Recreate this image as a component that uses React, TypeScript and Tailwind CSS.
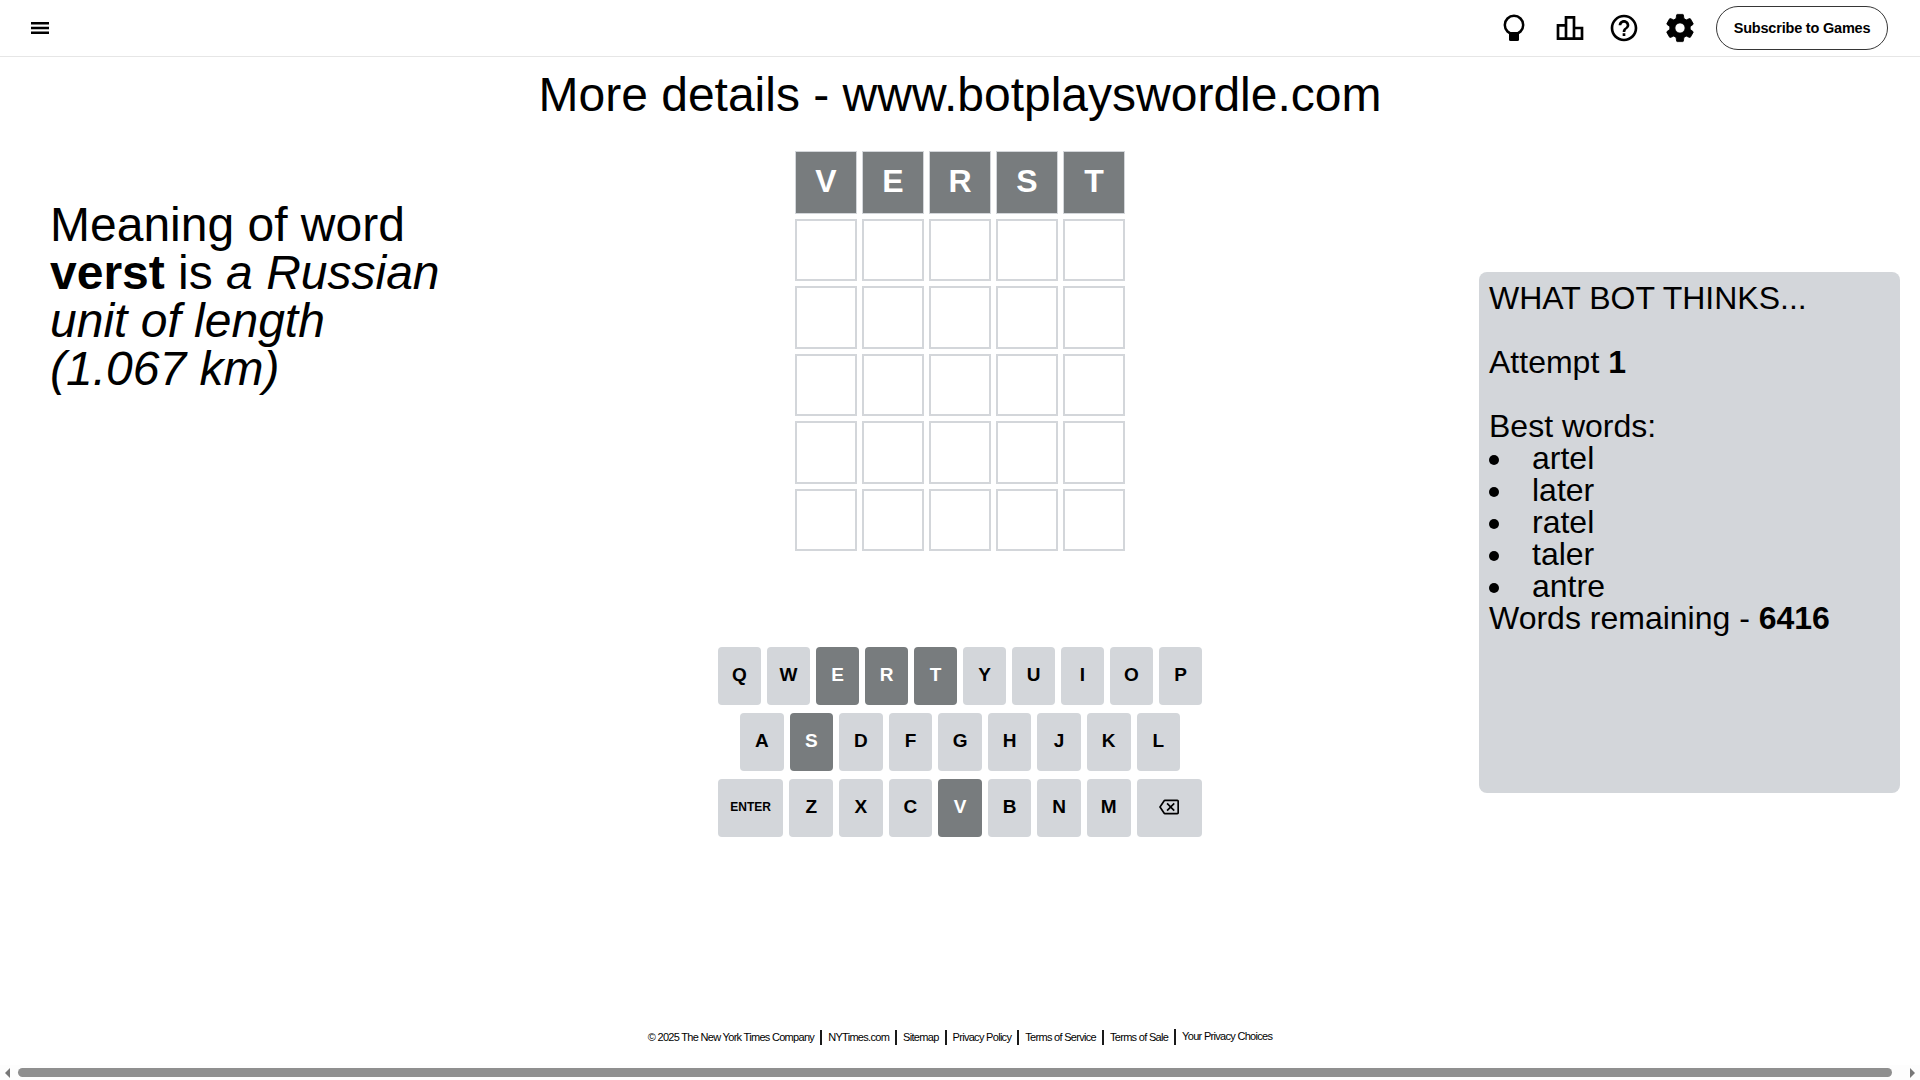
const sans = "font-['Liberation_Sans',Arial,sans-serif]"

const rows = [
  ['Q', 'W', 'E', 'R', 'T', 'Y', 'U', 'I', 'O', 'P'],
  ['A', 'S', 'D', 'F', 'G', 'H', 'J', 'K', 'L'],
  ['ENTER', 'Z', 'X', 'C', 'V', 'B', 'N', 'M', 'BACK'],
]
const used = ['E', 'R', 'T', 'S', 'V']
const footerLinks = ['NYTimes.com', 'Sitemap', 'Privacy Policy', 'Terms of Service', 'Terms of Sale']
const bestWords = ['artel', 'later', 'ratel', 'taler', 'antre']

const Hint = () => (
  <svg width="32" height="32" viewBox="0 0 32 32" fill="none">
    <circle cx="16" cy="13" r="9.200" stroke="black" strokeWidth="2.500" />
    <path d="M11 20h10v7.500a1.500 1.500 0 0 1-1.500 1.500h-7a1.500 1.500 0 0 1-1.500-1.500z" fill="black" />
  </svg>
)

const Stats = () => (
  <svg width="32" height="32" viewBox="0 0 24 24">
    <path d="M16 11V3H8v6H2v12h20V11h-6zm-6-6h4v14h-4V5zm-6 6h4v8H4v-8zm16 8h-4v-6h4v6z" fill="black" />
  </svg>
)

const Help = () => (
  <svg width="32" height="32" viewBox="0 0 24 24">
    <path
      d="M11 18h2v-2h-2v2zm1-16C6.480 2 2 6.480 2 12s4.480 10 10 10 10-4.480 10-10S17.520 2 12 2zm0 18c-4.410 0-8-3.590-8-8s3.590-8 8-8 8 3.590 8 8-3.590 8-8 8zm0-14c-2.210 0-4 1.790-4 4h2c0-1.100.9-2 2-2s2 .9 2 2c0 2-3 1.750-3 5h2c0-2.250 3-2.500 3-5 0-2.210-1.790-4-4-4z"
      fill="black"
    />
  </svg>
)

const Gear = () => (
  <svg width="34" height="34" viewBox="0 0 24 24">
    <path
      d="M19.140 12.940c.04-.3.06-.61.06-.94 0-.32-.02-.64-.07-.94l2.030-1.580a.49.49 0 0 0 .12-.61l-1.920-3.320a.488.488 0 0 0-.59-.22l-2.390.96c-.5-.38-1.030-.7-1.620-.94l-.36-2.540a.484.484 0 0 0-.48-.41h-3.840c-.24 0-.43.17-.47.41l-.36 2.540c-.59.24-1.130.57-1.620.94l-2.390-.96c-.22-.08-.47 0-.59.22L2.740 8.870c-.12.21-.08.47.12.61l2.030 1.580c-.05.3-.09.63-.09.94s.02.64.07.94l-2.030 1.580a.49.49 0 0 0-.12.61l1.920 3.320c.12.22.37.29.59.22l2.390-.96c.5.38 1.030.7 1.620.94l.36 2.540c.05.24.24.41.48.41h3.840c.24 0 .44-.17.47-.41l.36-2.540c.59-.24 1.130-.56 1.620-.94l2.390.96c.22.08.47 0 .59-.22l1.920-3.320c.12-.22.07-.47-.12-.61l-2.010-1.580zM12 15.600c-1.980 0-3.600-1.620-3.600-3.600s1.620-3.600 3.600-3.600 3.600 1.620 3.600 3.600-1.620 3.600-3.600 3.600z"
      fill="black"
      stroke="black"
      strokeWidth="0.6"
    />
  </svg>
)

const Backspace = () => (
  <svg width="20" height="20" viewBox="0 0 24 24">
    <path
      d="M22 3H7c-.69 0-1.230.35-1.590.88L0 12l5.410 8.110c.36.53.9.89 1.590.89h15c1.100 0 2-.9 2-2V5c0-1.100-.9-2-2-2zm0 16H7.070L2.400 12l4.660-7H22v14zm-11.590-2L14 13.410 17.590 17 19 15.590 15.410 12 19 8.410 17.590 7 14 10.590 10.410 7 9 8.410 12.590 12 9 15.590z"
      fill="black"
    />
  </svg>
)

const Key = ({ k }: { k: string }) => {
  const wide = k === 'ENTER' || k === 'BACK'
  const dark = used.includes(k)
  return (
    <div
      className={`h-[58px] rounded flex items-center justify-center font-bold pb-[2px] ${wide ? 'flex-[1.5]' : 'flex-1'} ${
        k === 'ENTER' ? 'text-xs' : 'text-[19px]'
      } ${dark ? 'bg-[#787c7e] text-white' : 'bg-[#d3d6da] text-black'}`}
    >
      {k === 'BACK' ? <Backspace /> : k}
    </div>
  )
}

export default function App() {
  return (
    <div className={`${sans} relative h-screen overflow-hidden bg-white text-black flex flex-col`}>
      <header className="h-[57px] shrink-0 border-b border-[#e6e6e6] flex items-center pl-[28px] pr-[32px]">
        <svg width="24" height="24" viewBox="0 0 24 24" className="shrink-0">
          <path d="M3 6h18v2.500H3zM3 10.800h18v2.500H3zM3 15.500h18V18H3z" fill="black" />
        </svg>
        <div className="ml-auto flex items-center">
          <div className="flex items-center mr-[19px]">
            <Hint />
            <div className="ml-[24px]">
              <Stats />
            </div>
            <div className="ml-[22px]">
              <Help />
            </div>
            <div className="ml-[23px]">
              <Gear />
            </div>
          </div>
          <div className="h-[44px] w-[172px] pt-[1px] rounded-full border border-[#363636] flex items-center justify-center text-[14.500px] font-bold tracking-[-0.2px]">
            Subscribe to Games
          </div>
        </div>
      </header>

      <h1 className="mt-[10px] text-center text-[48px] leading-[55px] font-normal">More details - www.botplayswordle.com</h1>

      <div className="flex-1 relative flex">
        <div className="w-[460px] shrink-0 pl-[50px] pt-[79px]">
          <p className="text-[48px] leading-[48px] w-[410px]">
            Meaning of word <b>verst</b> is <i>a Russian unit of length (1.067 km)</i>
          </p>
        </div>

        <div className="flex-1 flex flex-col items-center">
          <div className="mt-[29px] grid grid-cols-5 gap-[5px] w-[330px]">
            {Array.from({ length: 30 }).map((_, i) => (
              <div
                key={i}
                className={`h-[62.500px] flex items-center justify-center text-[32px] font-bold text-white ${
                  i < 5 ? 'bg-[#787c7e] border border-[#d3d6da] pb-[2px]' : 'border-2 border-[#d3d6da]'
                }`}
              >
                {'VERST'[i]}
              </div>
            ))}
          </div>
          <div className="mt-[96px] w-[484px] flex flex-col gap-2">
            {rows.map((row, r) => (
              <div key={r} className={`flex gap-[6px] ${r === 1 ? 'px-[22px]' : ''}`}>
                {row.map(k => (
                  <Key key={k} k={k} />
                ))}
              </div>
            ))}
          </div>
        </div>

        <div className="w-[460px] shrink-0 pl-[19px] pr-[20px] pt-[150px]">
          <div className="h-[521px] rounded-lg bg-[#d3d6da] pl-[10px] pr-[11px] pt-[10px] text-[32px] leading-[32px]">
            WHAT BOT THINKS...
            <br />
            <br />
            Attempt <b>1</b>
            <br />
            <br />
            Best words:
            <ul className="list-disc list-inside">
              {bestWords.map(w => (
                <li key={w}>{w}</li>
              ))}
            </ul>
            Words remaining - <b>6416</b>
          </div>
        </div>
      </div>

      <footer className="h-[20px] mb-[18px] flex items-center justify-center text-[11px] tracking-[-0.7px]">
        <span>© 2025 The New York Times Company</span>
        {footerLinks.map(l => (
          <span key={l} className="ml-[6px] pl-[6px] border-l-2 border-[#1a1a1a] leading-[15px]">
            {l}
          </span>
        ))}
        <span className="ml-[6px] pl-[6px] border-l-2 border-[#1a1a1a] leading-[15px] pb-[1px]">Your Privacy Choices</span>
      </footer>

      <div className="h-[15px] shrink-0 bg-[#fdfdfd] flex items-center">
        <div className="w-0 h-0 ml-[5px] border-y-[5px] border-y-transparent border-r-[5px] border-r-[#777]" />
        <div className="ml-[8px] flex-1 h-[9px] rounded-full bg-[#8f8f8f]" />
        <div className="w-0 h-0 ml-[18px] mr-[5px] border-y-[5px] border-y-transparent border-l-[5px] border-l-[#777]" />
      </div>
    </div>
  )
}
